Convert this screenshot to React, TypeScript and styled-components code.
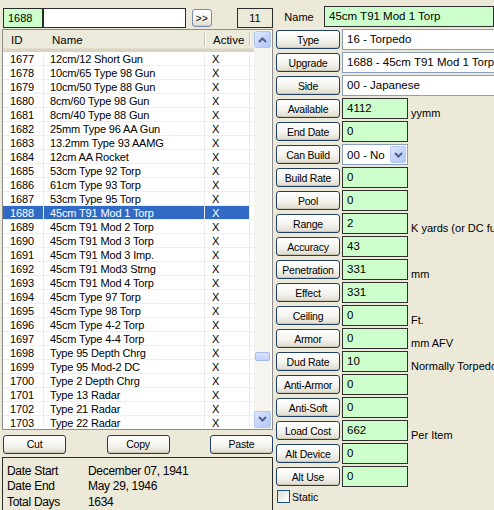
import React from 'react';
import styled, { createGlobalStyle, css } from 'styled-components';

const GlobalStyle = createGlobalStyle`
  html, body {
    margin: 0;
    padding: 0;
    background: #ece9d8;
    overflow: hidden;
  }
  * {
    box-sizing: border-box;
  }
`;

const FONT = `"Liberation Sans", Arial, sans-serif`;

const Window = styled.div`
  width: 494px;
  height: 510px;
  overflow: hidden;
  display: flex;
  background: #ece9d8;
  font-family: ${FONT};
  font-size: 11px;
  color: #000;
`;

/* ---------- left side: search bar, device list, clipboard buttons, dates ---------- */

const LeftPane = styled.div`
  width: 274px;
  flex-shrink: 0;
  display: flex;
  flex-direction: column;
  padding: 8px 0 0 2px;
`;

const TopBar = styled.div`
  display: flex;
  align-items: center;
  height: 20px;
`;

const Box = styled.div<{ $w: number; $bg?: string; $center?: boolean }>`
  width: ${p => p.$w}px;
  height: 20px;
  flex-shrink: 0;
  border: 1px solid #2b2b2b;
  background: ${p => p.$bg || '#fff'};
  padding: 2px 4px;
  font-size: 11px;
  line-height: 14px;
  text-align: ${p => (p.$center ? 'center' : 'left')};
`;

const XpButton = styled.button<{ $w?: number }>`
  width: ${p => (p.$w ? `${p.$w}px` : 'auto')};
  height: 19px;
  flex-shrink: 0;
  padding: 0;
  font-family: ${FONT};
  font-size: 10.5px;
  letter-spacing: -0.2px;
  color: #000;
  border: 1px solid #1f3f66;
  border-radius: 3px;
  background: linear-gradient(#ffffff 0%, #f4f3ee 55%, #e3e0d4 90%, #d6d0c0 100%);
  box-shadow: inset 0 -1px 0 #cdc9b8;
  cursor: default;
`;

const ArrowButton = styled(XpButton)`
  height: 18px;
  margin-left: 6px;
  border-color: #7a8fb0;
  font-size: 10px;
  letter-spacing: 0.5px;
`;

const ListBox = styled.div`
  margin-top: 1px;
  width: 271px;
  height: 407px;
  border: 1px solid #8c8c8c;
  background: #fff;
  display: flex;
  overflow: hidden;
`;

const ListArea = styled.div`
  flex: 1;
  display: flex;
  flex-direction: column;
`;

const columns = css`
  display: grid;
  grid-template-columns: 41px 161px 45px 1fr;
`;

const HeaderRow = styled.div`
  ${columns};
  height: 22px;
  background: #ebeadb;
  border-bottom: 3px solid #d8d4c4;
  box-shadow: inset 0 -1px 0 #e2dfd0;
`;

const HeaderCell = styled.div<{ $sep?: boolean }>`
  padding: 4px 0 0 8px;
  font-size: 11.5px;
  border-right: ${p => (p.$sep ? '1px solid #c7c5b2' : 'none')};
  box-shadow: ${p => (p.$sep ? '1px 0 0 #fff' : 'none')};
  margin: ${p => (p.$sep ? '3px 0 3px 0' : '0')};
  padding-top: ${p => (p.$sep ? '1px' : '4px')};
`;

const Row = styled.div<{ $selected?: boolean }>`
  ${columns};
  height: 14px;
  line-height: 14px;
  font-size: 11px;
  letter-spacing: -0.15px;
  color: ${p => (p.$selected ? '#fff' : '#000')};
  & > div:not(:last-child) {
    background: ${p => (p.$selected ? '#316ac5' : 'transparent')};
  }
`;

const Cell = styled.div<{ $pad: number }>`
  padding-left: ${p => p.$pad}px;
  border-right: 1px solid #ebebeb;
  border-bottom: 1px solid #eeeeee;
  white-space: nowrap;
  overflow: hidden;
`;

const Filler = styled.div`
  border-bottom: 1px solid #eeeeee;
`;

const Scrollbar = styled.div`
  width: 17px;
  margin-right: 1px;
  display: flex;
  flex-direction: column;
  background: #f5f4ef;
  padding: 1px 0;
`;

const ScrollBtn = styled.div`
  height: 17px;
  border: 1px solid #b6c7f0;
  border-radius: 2px;
  background: linear-gradient(135deg, #dde7ff 0%, #c2d2fb 60%, #b3c6f6 100%);
  display: flex;
  align-items: center;
  justify-content: center;
`;

const Track = styled.div`
  flex: 1;
  display: flex;
  flex-direction: column;
  justify-content: flex-end;
  padding-bottom: 50px;
`;

const Thumb = styled.div`
  height: 9px;
  margin: 0 1px;
  border: 1px solid #a7b9e6;
  border-radius: 2px;
  background: linear-gradient(#d6e1fd, #c3d2fa);
`;

const ClipRow = styled.div`
  display: flex;
  justify-content: space-between;
  width: 270px;
  margin: 5px 0 0 1px;
`;

const InfoPanel = styled.div`
  margin-top: 3px;
  width: 271px;
  flex: 1;
  border: 1px solid #2b2b2b;
  border-bottom: none;
  padding: 6px 0 0 4px;
  display: grid;
  grid-template-columns: 81px 1fr;
  grid-auto-rows: 15.5px;
  font-size: 12px;
  letter-spacing: -0.3px;
  align-content: start;
`;

/* ---------- right side: device fields ---------- */

const RightPane = styled.div`
  flex: 1;
  padding: 6px 0 0 2px;
  display: flex;
  flex-direction: column;
  gap: 2px;
  min-width: 0;
`;

const FieldRow = styled.div`
  display: flex;
  align-items: center;
  gap: 2px;
  height: 21px;
`;

const NameLabel = styled.div`
  width: 64px;
  text-align: center;
  font-size: 11px;
`;

const Field = styled.div<{ $kind: 'green' | 'white'; $wide?: boolean }>`
  width: ${p => (p.$wide ? '170px' : '66px')};
  height: 21px;
  flex-shrink: 0;
  padding: 2px 4px;
  font-size: 11.5px;
  line-height: 15px;
  white-space: nowrap;
  overflow: hidden;
  background: ${p => (p.$kind === 'green' ? '#ccffcc' : '#fff')};
  border: 1px solid ${p => (p.$kind === 'green' ? '#2f2f2f' : '#8a9fbd')};
`;

const SelectBox = styled.div`
  width: 66px;
  height: 21px;
  flex-shrink: 0;
  display: flex;
  align-items: center;
  background: #fff;
  border: 1px solid #8a9fbd;
  padding: 1px 1px 1px 4px;
  font-size: 11.5px;
`;

const SelectArrow = styled(ScrollBtn)`
  margin-left: auto;
  width: 16px;
  height: 17px;
`;

const Note = styled.span`
  align-self: flex-end;
  margin-left: 1px;
  font-size: 11px;
  white-space: nowrap;
  line-height: 14px;
  margin-bottom: -1px;
`;

const CheckRow = styled.label`
  display: flex;
  align-items: center;
  gap: 2px;
  margin-top: 1px;
  padding-left: 1px;
  font-size: 10.5px;
`;

const CheckSquare = styled.span`
  width: 13px;
  height: 13px;
  border: 1px solid #1c5180;
  background: linear-gradient(135deg, #dcdbd5, #fff);
`;

const Chevron: React.FC<{ up?: boolean }> = ({ up }) => (
  <svg width="9" height="6" viewBox="0 0 9 6">
    <path
      d={up ? 'M1 5 L4.5 1.5 L8 5' : 'M1 1 L4.5 4.5 L8 1'}
      fill="none"
      stroke="#4d6185"
      strokeWidth="2"
    />
  </svg>
);

const devices: [number, string][] = [
  [1677, '12cm/12 Short Gun'],
  [1678, '10cm/65 Type 98 Gun'],
  [1679, '10cm/50 Type 88 Gun'],
  [1680, '8cm/60 Type 98 Gun'],
  [1681, '8cm/40 Type 88 Gun'],
  [1682, '25mm Type 96 AA Gun'],
  [1683, '13.2mm Type 93 AAMG'],
  [1684, '12cm AA Rocket'],
  [1685, '53cm Type 92 Torp'],
  [1686, '61cm Type 93 Torp'],
  [1687, '53cm Type 95 Torp'],
  [1688, '45cm T91 Mod 1 Torp'],
  [1689, '45cm T91 Mod 2 Torp'],
  [1690, '45cm T91 Mod 3 Torp'],
  [1691, '45cm T91 Mod 3 Imp.'],
  [1692, '45cm T91 Mod3 Strng'],
  [1693, '45cm T91 Mod 4 Torp'],
  [1694, '45cm Type 97 Torp'],
  [1695, '45cm Type 98 Torp'],
  [1696, '45cm Type 4-2 Torp'],
  [1697, '45cm Type 4-4 Torp'],
  [1698, 'Type 95 Depth Chrg'],
  [1699, 'Type 95 Mod-2 DC'],
  [1700, 'Type 2 Depth Chrg'],
  [1701, 'Type 13 Radar'],
  [1702, 'Type 21 Radar'],
  [1703, 'Type 22 Radar'],
];

type FieldDef = {
  label: string;
  value: string;
  kind?: 'green' | 'white' | 'select';
  note?: string;
};

const fields: FieldDef[] = [
  { label: 'Type', value: '16 - Torpedo', kind: 'white' },
  { label: 'Upgrade', value: '1688 - 45cm T91 Mod 1 Torp', kind: 'white' },
  { label: 'Side', value: '00 - Japanese', kind: 'white' },
  { label: 'Available', value: '4112', note: 'yymm' },
  { label: 'End Date', value: '0' },
  { label: 'Can Build', value: '00 - No', kind: 'select' },
  { label: 'Build Rate', value: '0' },
  { label: 'Pool', value: '0' },
  { label: 'Range', value: '2', note: 'K yards  (or DC fuse depth)' },
  { label: 'Accuracy', value: '43' },
  { label: 'Penetration', value: '331', note: 'mm' },
  { label: 'Effect', value: '331' },
  { label: 'Ceiling', value: '0', note: 'Ft.' },
  { label: 'Armor', value: '0', note: 'mm AFV' },
  { label: 'Dud Rate', value: '10', note: 'Normally Torpedo only' },
  { label: 'Anti-Armor', value: '0' },
  { label: 'Anti-Soft', value: '0' },
  { label: 'Load Cost', value: '662', note: 'Per Item' },
  { label: 'Alt Device', value: '0' },
  { label: 'Alt Use', value: '0' },
];

const SELECTED = 1688;

const App: React.FC = () => {
  return (
    <>
      <GlobalStyle />
      <Window>
        <LeftPane>
          <TopBar>
            <Box $w={40} $bg="#ccffcc" style={{ marginLeft: 1 }}>1688</Box>
            <Box $w={143} />
            <ArrowButton $w={20}>&gt;&gt;</ArrowButton>
            <Box $w={36} $bg="#ece9d8" $center style={{ marginLeft: 25 }}>11</Box>
          </TopBar>

          <ListBox>
            <ListArea>
              <HeaderRow>
                <HeaderCell>ID</HeaderCell>
                <HeaderCell $sep>Name</HeaderCell>
                <HeaderCell $sep>Active</HeaderCell>
                <div />
              </HeaderRow>
              {devices.map(([id, name]) => (
                <Row key={id} $selected={id === SELECTED}>
                  <Cell $pad={7}>{id}</Cell>
                  <Cell $pad={6}>{name}</Cell>
                  <Cell $pad={7}>X</Cell>
                  <Filler />
                </Row>
              ))}
            </ListArea>
            <Scrollbar>
              <ScrollBtn>
                <Chevron up />
              </ScrollBtn>
              <Track>
                <Thumb />
              </Track>
              <ScrollBtn>
                <Chevron />
              </ScrollBtn>
            </Scrollbar>
          </ListBox>

          <ClipRow>
            <XpButton $w={63}>Cut</XpButton>
            <XpButton $w={63}>Copy</XpButton>
            <XpButton $w={63}>Paste</XpButton>
          </ClipRow>

          <InfoPanel>
            <span>Date Start</span>
            <span>December 07, 1941</span>
            <span>Date End</span>
            <span>May 29, 1946</span>
            <span>Total Days</span>
            <span>1634</span>
          </InfoPanel>
        </LeftPane>

        <RightPane>
          <FieldRow>
            <NameLabel>Name</NameLabel>
            <Field $kind="green" $wide>45cm T91 Mod 1 Torp</Field>
          </FieldRow>
          {fields.map(f => (
            <FieldRow key={f.label}>
              <XpButton $w={64}>{f.label}</XpButton>
              {f.kind === 'select' ? (
                <SelectBox>
                  {f.value}
                  <SelectArrow>
                    <Chevron />
                  </SelectArrow>
                </SelectBox>
              ) : (
                <Field $kind={f.kind === 'white' ? 'white' : 'green'} $wide={f.kind === 'white'}>
                  {f.value}
                </Field>
              )}
              {f.note && <Note>{f.note}</Note>}
            </FieldRow>
          ))}
          <CheckRow>
            <CheckSquare />
            Static
          </CheckRow>
        </RightPane>
      </Window>
    </>
  );
};

export default App;
